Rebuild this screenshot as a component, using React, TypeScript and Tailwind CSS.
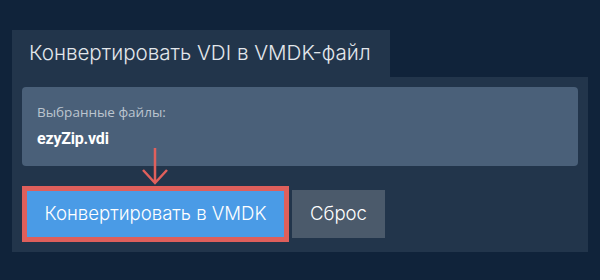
export default function App() {
  return (
    <div className="w-[600px] h-[280px] bg-[#10233a] pt-[30px] px-3 font-['Inter',sans-serif]">
      <div className="inline-flex items-center h-[47px] w-[378px] pl-[17px] bg-[#22354b] text-[20.6px] text-[#e3e7eb] font-light">
        Конвертировать VDI в VMDK-файл
      </div>
      <div className="relative bg-[#22354b] h-[175px] p-[10px]">
        <div className="h-[79px] rounded-[4px] bg-[#4a6079] px-[15px] pt-[16px]">
          <div className="text-[13.5px] leading-[18px] text-[#bcc5cf] font-['Open_Sans',sans-serif]">Выбранные файлы:</div>
          <div className="mt-[9px] text-[16px] leading-[18px] font-bold text-white font-['Roboto',sans-serif] tracking-[-0.2px]">ezyZip.vdi</div>
        </div>

        <svg className="absolute left-[130px] top-[70px]" width="30" height="40" viewBox="0 0 30 40">
          <path d="M13 1 V36 M1 23 L13 36 L25 23" fill="none" stroke="#e0605c" strokeWidth="2.5" />
        </svg>

        <div className="flex items-center gap-[3px] mt-[20px]">
          <button className="h-[56px] w-[267px] border-[5px] border-[#df5f5b] bg-[#4a9be6] text-[18.6px] font-light text-white">
            Конвертировать в VMDK
          </button>
          <button className="h-[48px] w-[93px] bg-[#4b5a6b] text-[18.6px] font-light text-white">
            Сброс
          </button>
        </div>
      </div>
    </div>
  );
}
